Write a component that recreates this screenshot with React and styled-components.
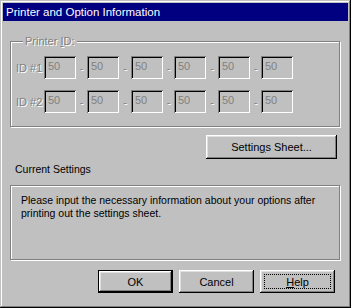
import styled, { createGlobalStyle, css } from 'styled-components';

const GlobalStyle = createGlobalStyle`
  html, body {
    margin: 0;
    padding: 0;
    background: #c0c0c0;
  }
  * {
    box-sizing: border-box;
  }
`;

const bevelOut = css`
  box-shadow:
    inset -1px -1px #000000,
    inset 1px 1px #ffffff,
    inset -2px -2px #808080,
    inset 2px 2px #dfdfdf;
`;

const Window = styled.div`
  width: 351px;
  height: 308px;
  padding: 3px;
  background: #c0c0c0;
  font-family: "Liberation Sans", Arial, sans-serif;
  font-size: 10.5px;
  color: #000;
  display: flex;
  flex-direction: column;
  box-shadow:
    inset -1px -1px #000000,
    inset 1px 1px #c0c0c0,
    inset -2px -2px #808080,
    inset 2px 2px #ffffff;
`;

const TitleBar = styled.div`
  height: 18px;
  background: #000080;
  color: #fff;
  font-size: 11.5px;
  line-height: 18px;
  padding-left: 3px;
  white-space: nowrap;
`;

const Body = styled.div`
  flex: 1;
  padding: 14px 7px 0;
  display: flex;
  flex-direction: column;
`;

const GroupBox = styled.fieldset`
  margin: 0 1px 0 0;
  padding: 0 6px 13px 5px;
  border: 1px solid #808080;
  box-shadow: 1px 1px 0 #ffffff, inset 1px 1px 0 #ffffff;
`;

const Legend = styled.legend`
  margin-left: 7px;
  padding: 0 2px;
  background: #c0c0c0;
  line-height: 13px;
  font-size: 11px;
  color: #808080;
  text-shadow: 1px 1px 0 #ffffff;
`;

const IdRow = styled.div`
  display: flex;
  align-items: center;
  height: 23px;
  margin-top: ${p => p.$first ? '8px' : '11px'};
`;

const IdLabel = styled.span`
  width: 28px;
  font-size: 11px;
  color: #808080;
  text-shadow: 1px 1px 0 #ffffff;
  white-space: nowrap;
`;

const EditBox = styled.div`
  width: 32px;
  height: 23px;
  padding: 4px 0 0 4px;
  font-size: 11px;
  color: #808080;
  line-height: 13px;
  background: #c0c0c0;
  box-shadow:
    inset 1px 1px #808080,
    inset -1px -1px #ffffff,
    inset 2px 2px #000000,
    inset -2px -2px #c0c0c0;
`;

const Dash = styled.span`
  width: ${p => p.$wide ? '12px' : '11px'};
  text-align: center;
  color: #808080;
  text-shadow: 1px 1px 0 #ffffff;
`;

const SheetRow = styled.div`
  display: flex;
  justify-content: flex-end;
  margin-top: 8px;
  padding-right: 4px;
`;

const Button = styled.button`
  width: ${p => p.$width || 75}px;
  height: ${p => p.$height || 23}px;
  padding: 0;
  border: none;
  background: #c0c0c0;
  font-family: inherit;
  font-size: 11px;
  color: #000;
  position: relative;
  ${bevelOut};
  ${p => p.$default && css`
    box-shadow:
      inset -1px -1px #000000,
      inset 1px 1px #000000,
      inset -2px -2px #000000,
      inset 2px 2px #ffffff,
      inset -3px -3px #808080,
      inset 3px 3px #dfdfdf;
  `}
  ${p => p.$focused && css`
    &::after {
      content: '';
      position: absolute;
      inset: 4px;
      border: 1px dotted #000;
    }
  `}
`;

const Caption = styled.div`
  margin-top: 4px;
  padding-left: 5px;
  line-height: 13px;
`;

const StaticFrame = styled.div`
  margin: 9px 1px 0 0;
  height: 75px;
  padding: 8px 6px 0 10px;
  line-height: 13px;
  border: 1px solid #808080;
  box-shadow: 1px 1px 0 #ffffff, inset 1px 1px 0 #ffffff;
`;

const ButtonRow = styled.div`
  display: flex;
  justify-content: flex-end;
  gap: 6px;
  margin-top: 10px;
  padding-right: 6px;
`;

const u = (s) => <u>{s}</u>;

export default function App() {
  const values = ['50', '50', '50', '50', '50', '50'];
  return (
    <>
      <GlobalStyle />
      <Window>
        <TitleBar>Printer and Option Information</TitleBar>
        <Body>
          <GroupBox>
            <Legend>Printer {u('I')}D:</Legend>
            {[1, 2].map(n => (
              <IdRow key={n} $first={n === 1}>
                <IdLabel>ID #{n}</IdLabel>
                {values.map((v, i) => (
                  <span key={i} style={{ display: 'contents' }}>
                    {i > 0 && <Dash $wide={i % 2 === 0}>-</Dash>}
                    <EditBox>{v}</EditBox>
                  </span>
                ))}
              </IdRow>
            ))}
          </GroupBox>
          <SheetRow>
            <Button $width={131} $height={24}>Settin{u('g')}s Sheet...</Button>
          </SheetRow>
          <Caption>Current Settings</Caption>
          <StaticFrame>
            Please input the necessary information about your options after printing out the settings sheet.
          </StaticFrame>
          <ButtonRow>
            <Button $default>OK</Button>
            <Button>Cancel</Button>
            <Button $focused>{u('H')}elp</Button>
          </ButtonRow>
        </Body>
      </Window>
    </>
  );
}
